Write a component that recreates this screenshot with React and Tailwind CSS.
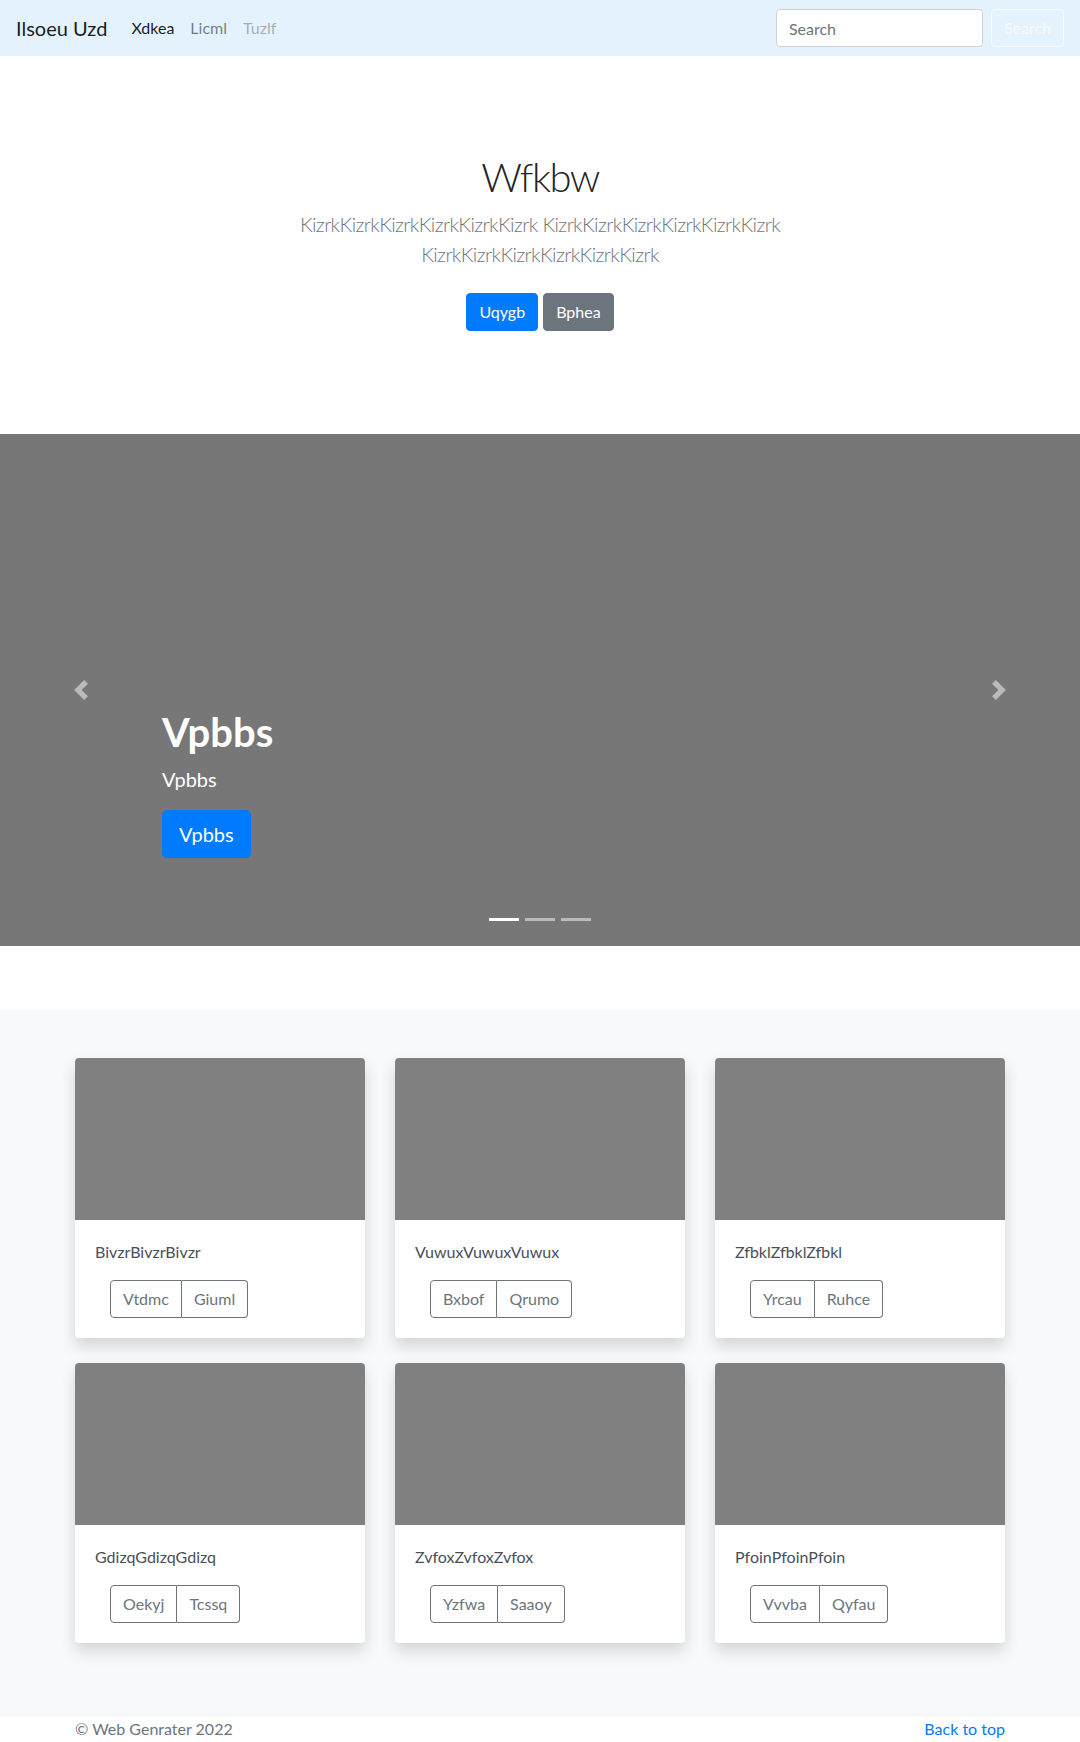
import React from "react";

const cards = [
  { title: "BivzrBivzrBivzr", buttons: ["Vtdmc", "Giuml"] },
  { title: "VuwuxVuwuxVuwux", buttons: ["Bxbof", "Qrumo"] },
  { title: "ZfbklZfbklZfbkl", buttons: ["Yrcau", "Ruhce"] },
  { title: "GdizqGdizqGdizq", buttons: ["Oekyj", "Tcssq"] },
  { title: "ZvfoxZvfoxZvfox", buttons: ["Yzfwa", "Saaoy"] },
  { title: "PfoinPfoinPfoin", buttons: ["Vvvba", "Qyfau"] },
];

const ChevronIcon = ({ dir }) => (
  <svg width="20" height="20" viewBox="0 0 8 8" fill="#fff">
    {dir === "prev" ? (
      <path d="M5.25 0l-4 4 4 4 1.5-1.5L4.25 4l2.5-2.5L5.25 0z" />
    ) : (
      <path d="M2.75 0l-1.5 1.5L3.75 4l-2.5 2.5L2.75 8l4-4-4-4z" />
    )}
  </svg>
);

const NavBar = () => (
  <nav className="flex items-center h-[56px] px-4 py-2 bg-[#e3f2fd]">
    <a href="#" className="text-[20px] leading-[30px] py-[5px] mr-4 text-black/90">
      Ilsoeu Uzd
    </a>
    <ul className="flex">
      <li>
        <a href="#" className="block px-2 py-2 text-black/90">Xdkea</a>
      </li>
      <li>
        <a href="#" className="block px-2 py-2 text-black/50">Licml</a>
      </li>
      <li>
        <span className="block px-2 py-2 text-black/30">Tuzlf</span>
      </li>
    </ul>
    <form className="ml-auto flex items-center" onSubmit={(e) => e.preventDefault()}>
      <input
        type="search"
        placeholder="Search"
        className="w-[207px] h-[38px] px-3 bg-white border border-[#ced4da] rounded-[4px] text-[16px] text-[#495057] placeholder:text-[#6c757d] outline-none"
      />
      <button className="ml-2 h-[38px] px-3 border border-[#f8f9fa] rounded-[4px] text-[#f8f9fa] text-[16px]">
        Search
      </button>
    </form>
  </nav>
);

const Hero = () => (
  <section className="pt-[97px] pb-[95px] text-center bg-white">
    <div className="max-w-[960px] mx-auto px-[15px]">
      <div className="max-w-[610px] mx-auto">
        <h1 className="text-[40px] leading-[48px] font-light tracking-[-1.5px] text-[#212529] mb-2">Wfkbw</h1>
        <p className="text-[20px] leading-[30px] font-light tracking-[-0.6px] text-[#6c757d] mb-4">
          KizrkKizrkKizrkKizrkKizrkKizrk KizrkKizrkKizrkKizrkKizrkKizrk KizrkKizrkKizrkKizrkKizrkKizrk
        </p>
        <p className="flex justify-center gap-[5px]">
          <a href="#" className="my-2 px-3 py-[6px] text-[16px] leading-[24px] border border-[#007bff] bg-[#007bff] text-white rounded-[4px]">
            Uqygb
          </a>
          <a href="#" className="my-2 px-3 py-[6px] text-[16px] leading-[24px] border border-[#6c757d] bg-[#6c757d] text-white rounded-[4px]">
            Bphea
          </a>
        </p>
      </div>
    </div>
  </section>
);

const Carousel = () => (
  <div className="relative h-[512px] bg-[#777] mb-16">
    <a href="#" className="absolute left-0 top-0 bottom-0 w-[15%] flex items-center justify-center opacity-50">
      <ChevronIcon dir="prev" />
    </a>
    <a href="#" className="absolute right-0 top-0 bottom-0 w-[15%] flex items-center justify-center opacity-50">
      <ChevronIcon dir="next" />
    </a>
    <div className="absolute left-[15%] right-[15%] bottom-[52px] pb-5 text-left text-white">
      <h1 className="text-[40px] leading-[48px] font-bold mb-2">Vpbbs</h1>
      <p className="text-[20px] leading-[30px] mb-4">Vpbbs</p>
      <p className="mb-4">
        <a href="#" className="inline-block px-4 py-2 text-[20px] leading-[30px] bg-[#007bff] border border-[#007bff] rounded-[4.8px] text-white">
          Vpbbs
        </a>
      </p>
    </div>
    <ol className="absolute left-0 right-0 bottom-[25px] flex justify-center">
      <li className="w-[30px] h-[3px] mx-[3px] bg-white"></li>
      <li className="w-[30px] h-[3px] mx-[3px] bg-white opacity-50"></li>
      <li className="w-[30px] h-[3px] mx-[3px] bg-white opacity-50"></li>
    </ol>
  </div>
);

const Card = ({ title, buttons }) => (
  <div className="bg-white rounded-[4px] overflow-hidden shadow-[0_8px_16px_rgba(0,0,0,0.15)]">
    <div className="h-[162px] bg-[#808080]"></div>
    <div className="p-5">
      <p className="text-[16px] leading-[24px] text-[#495057] mb-4">{title}</p>
      <div className="ml-[15px] inline-flex">
        <button className="h-[38px] px-3 text-[16px] text-[#6c757d] border border-[#6c757d] rounded-l-[4px]">
          {buttons[0]}
        </button>
        <button className="h-[38px] px-3 text-[16px] text-[#6c757d] border border-l-0 border-[#6c757d] rounded-r-[4px]">
          {buttons[1]}
        </button>
      </div>
    </div>
  </div>
);

export default function App() {
  return (
    <div className="min-h-screen bg-white font-['Lato',sans-serif] text-[16px] leading-[24px] text-[#212529]">
      <NavBar />
      <main>
        <Hero />
        <Carousel />
        <div className="pt-12 pb-[74px] bg-[#f8f9fa]">
          <div className="max-w-[960px] mx-auto px-[15px] grid grid-cols-3 gap-x-[30px] gap-y-[25px]">
            {cards.map((c) => (
              <Card key={c.title} title={c.title} buttons={c.buttons} />
            ))}
          </div>
        </div>
      </main>
      <footer className="pb-12 text-[#6c757d]">
        <div className="max-w-[960px] mx-auto px-[15px] flex justify-between">
          <p>© Web Genrater 2022</p>
          <p>
            <a href="#" className="text-[#007bff]">Back to top</a>
          </p>
        </div>
      </footer>
    </div>
  );
}
